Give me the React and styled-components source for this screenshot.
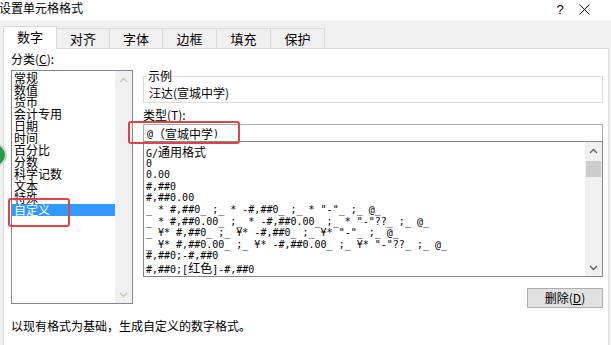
import React from 'react';
import styled, { createGlobalStyle } from 'styled-components';

const GlobalStyle = createGlobalStyle`
  html, body {
    margin: 0;
    padding: 0;
  }

  body {
    width: 611px;
    height: 345px;
    overflow: hidden;
    background: #f0f0f0;
    color: #000;
    font-family: "Noto Sans CJK SC", "Noto Sans", sans-serif;
  }
`;

const TABS = [
  { label: '数字', width: 54, active: true },
  { label: '对齐', width: 53 },
  { label: '字体', width: 53 },
  { label: '边框', width: 54 },
  { label: '填充', width: 54 },
  { label: '保护', width: 54 },
];

const CATEGORIES = [
  '常规', '数值', '货币', '会计专用', '日期', '时间',
  '百分比', '分数', '科学记数', '文本', '特殊', '自定义',
];

const FORMATS = [
  'G/通用格式',
  '0',
  '0.00',
  '#,##0',
  '#,##0.00',
  '_ * #,##0_ ;_ * -#,##0_ ;_ * "-"_ ;_ @_',
  '_ * #,##0.00_ ;_ * -#,##0.00_ ;_ * "-"??_ ;_ @_',
  '_ ¥* #,##0_ ;_ ¥* -#,##0_ ;_ ¥* "-"_ ;_ @_',
  '_ ¥* #,##0.00_ ;_ ¥* -#,##0.00_ ;_ ¥* "-"??_ ;_ @_',
  '#,##0;-#,##0',
  '#,##0;[红色]-#,##0',
];

const Dialog = styled.div`
  position: relative;
  width: 611px;
  height: 345px;
  overflow: hidden;
  background: #f0f0f0;
`;

const TitleBar = styled.div`
  height: 21px;
  background: #fff;
  display: flex;
  align-items: flex-start;
`;

const Title = styled.div`
  flex: 1;
  margin-left: -1px;
  font-size: 12px;
  line-height: 16px;
`;

const TitleButton = styled.div`
  width: ${(p) => p.$w}px;
  height: 18px;
  display: flex;
  align-items: center;
  justify-content: center;
  font-family: "Liberation Sans", sans-serif;
  font-size: 13px;
`;

const TabStrip = styled.div`
  height: 27px;
  padding-left: 3px;
  display: flex;
  align-items: flex-end;
  position: relative;
  z-index: 1;
`;

const Tab = styled.div`
  box-sizing: border-box;
  width: ${(p) => p.$w}px;
  height: ${(p) => (p.$active ? 23 : 20)}px;
  margin-bottom: ${(p) => (p.$active ? -1 : 0)}px;
  padding-bottom: ${(p) => (p.$active ? 2 : 0)}px;
  background: ${(p) => (p.$active ? '#fff' : '#f0f0f0')};
  border: 1px solid #d9d9d9;
  border-bottom: none;
  border-left: ${(p) => (p.$first ? '1px solid #d9d9d9' : 'none')};
  display: flex;
  align-items: center;
  justify-content: center;
  font-size: 13px;
  line-height: 16px;
`;

const Panel = styled.div`
  box-sizing: border-box;
  height: 297px;
  margin: 0 2px 0 3px;
  padding: 0 5px 0 7px;
  background: #fff;
  border: 1px solid #d9d9d9;
  border-bottom: none;
`;

const Columns = styled.div`
  display: grid;
  grid-template-columns: 122px 460px;
  column-gap: 10px;
  align-items: start;
`;

const Column = styled.div`
  display: flex;
  flex-direction: column;
  padding-top: ${(p) => p.$top || 0}px;
`;

const Label = styled.div`
  margin-top: ${(p) => p.$mt || 0}px;
  font-size: 12px;
  line-height: 16px;
`;

const U = styled.span`
  text-decoration: underline;
`;

const ListBox = styled.div`
  box-sizing: border-box;
  height: ${(p) => p.$h}px;
  margin-top: ${(p) => p.$mt || 0}px;
  border: 1px solid #828790;
  background: #fff;
  display: flex;
`;

const Items = styled.div`
  flex: 1;
  min-width: 0;
  overflow: hidden;
  padding-top: ${(p) => p.$pt}px;
`;

const Category = styled.div`
  height: 12px;
  padding-left: 2px;
  font-size: 12px;
  line-height: 12px;
  white-space: nowrap;
  background: ${(p) => (p.$selected ? '#3399ff' : 'transparent')};
  color: ${(p) => (p.$selected ? '#fff' : '#000')};
`;

const FormatRow = styled.div`
  height: 11.6px;
  padding-left: 2px;
  font-family: "DejaVu Sans Mono", "Liberation Mono", "Noto Sans CJK SC", monospace;
  font-size: 10px;
  line-height: 11.6px;
  white-space: pre;
`;

const Han = styled.span`
  font-family: "Noto Sans CJK SC", sans-serif;
  font-size: 12px;
`;

const Track = styled.div`
  width: 17px;
  background: #f0f0f0;
  display: flex;
  flex-direction: column;
  align-items: center;
`;

const Arrow = styled.div`
  width: 17px;
  height: 17px;
  display: flex;
  align-items: center;
  justify-content: center;
`;

const Thumb = styled.div`
  width: 15px;
  height: 16px;
  margin-top: 2px;
  background: #cdcdcd;
`;

const Spacer = styled.div`
  flex: 1;
`;

const GroupBox = styled.fieldset`
  margin: 0;
  min-width: 0;
  padding: 2px 3px 1px 3px;
  border: 1px solid #dcdcdc;
`;

const Legend = styled.legend`
  padding: 0 1px;
  font-size: 12px;
  line-height: 14px;
`;

const Sample = styled.div`
  padding-left: 2px;
  font-size: 12px;
  line-height: 16px;
`;

const TypeInput = styled.div`
  box-sizing: border-box;
  height: 18px;
  margin-top: 1px;
  padding-left: 3px;
  border: 1px solid #abadb3;
  display: flex;
  align-items: center;
  font-family: "DejaVu Sans Mono", "Liberation Mono", monospace;
  font-size: 10px;
  white-space: pre;
`;

const ButtonRow = styled.div`
  margin-top: 11px;
  display: flex;
  justify-content: flex-end;
`;

const Button = styled.div`
  box-sizing: border-box;
  width: 76px;
  height: 20px;
  background: #e1e1e1;
  border: 1px solid #adadad;
  display: flex;
  align-items: center;
  justify-content: center;
  font-size: 12px;
  line-height: 16px;
`;

const Hint = styled.div`
  margin-top: 10px;
  font-size: 12px;
  line-height: 16px;
`;

const Marker = styled.div`
  position: absolute;
  left: ${(p) => p.$x}px;
  top: ${(p) => p.$y}px;
  width: ${(p) => p.$w}px;
  height: ${(p) => p.$h}px;
  box-sizing: border-box;
  border: 2px solid #d9464a;
  border-radius: 3px;
  z-index: 3;
`;

const SideBadge = styled.div`
  position: absolute;
  left: -17px;
  top: 143px;
  width: 20px;
  height: 20px;
  border-radius: 50%;
  background: #1f9d4b;
  border: 2px solid #d4d4d4;
  z-index: 3;
`;

const Chevron = ({ down, color }) => (
  <svg width="9" height="6" viewBox="0 0 9 6">
    <polyline
      points={down ? '1,1 4.5,4.5 8,1' : '1,5 4.5,1.5 8,5'}
      fill="none"
      stroke={color}
      strokeWidth="1.3"
    />
  </svg>
);

const CloseIcon = () => (
  <svg width="11" height="11" viewBox="0 0 11 11">
    <path d="M0.5 0.5 L10.5 10.5 M10.5 0.5 L0.5 10.5" stroke="#111" strokeWidth="1" />
  </svg>
);

const withHan = (text) =>
  text.split(/([\u3000-\u9fff\uff00-\uffef]+)/).map((part, i) =>
    /[\u3000-\u9fff\uff00-\uffef]/.test(part) ? <Han key={i}>{part}</Han> : part
  );

export default function App() {
  return (
    <Dialog>
      <GlobalStyle />

      <TitleBar>
        <Title>设置单元格格式</Title>
        <TitleButton $w={14}>?</TitleButton>
        <TitleButton $w={34}>
          <CloseIcon />
        </TitleButton>
        <TitleButton $w={10} />
      </TitleBar>

      <TabStrip>
        {TABS.map((t, i) => (
          <Tab key={t.label} $w={t.width} $active={t.active} $first={i === 0}>
            {t.label}
          </Tab>
        ))}
      </TabStrip>

      <Panel>
        <Columns>
          <Column>
            <Label $mt={2}>分类(<U>C</U>):</Label>
            <ListBox $h={234} $mt={3}>
              <Items $pt={1}>
                {CATEGORIES.map((c) => (
                  <Category key={c} $selected={c === '自定义'}>{c}</Category>
                ))}
              </Items>
              <Track>
                <Arrow><Chevron color="#c4c4c4" /></Arrow>
                <Spacer />
                <Arrow><Chevron down color="#c4c4c4" /></Arrow>
              </Track>
            </ListBox>
          </Column>

          <Column $top={20}>
            <GroupBox>
              <Legend>示例</Legend>
              <Sample>汪达(宣城中学)</Sample>
            </GroupBox>

            <Label $mt={4}>类型(<U>T</U>):</Label>
            <TypeInput>{withHan('@（宣城中学)')}</TypeInput>

            <ListBox $h={136} $mt={-1}>
              <Items $pt={4}>
                {FORMATS.map((f) => (
                  <FormatRow key={f}>{withHan(f)}</FormatRow>
                ))}
              </Items>
              <Track>
                <Arrow><Chevron color="#606060" /></Arrow>
                <Thumb />
                <Spacer />
                <Arrow><Chevron down color="#606060" /></Arrow>
              </Track>
            </ListBox>

            <ButtonRow>
              <Button>删除(<U>D</U>)</Button>
            </ButtonRow>
          </Column>
        </Columns>

        <Hint>以现有格式为基础，生成自定义的数字格式。</Hint>
      </Panel>

      <Marker $x={128} $y={121} $w={112} $h={23} />
      <Marker $x={8} $y={198} $w={62} $h={29} />
      <SideBadge />
    </Dialog>
  );
}
